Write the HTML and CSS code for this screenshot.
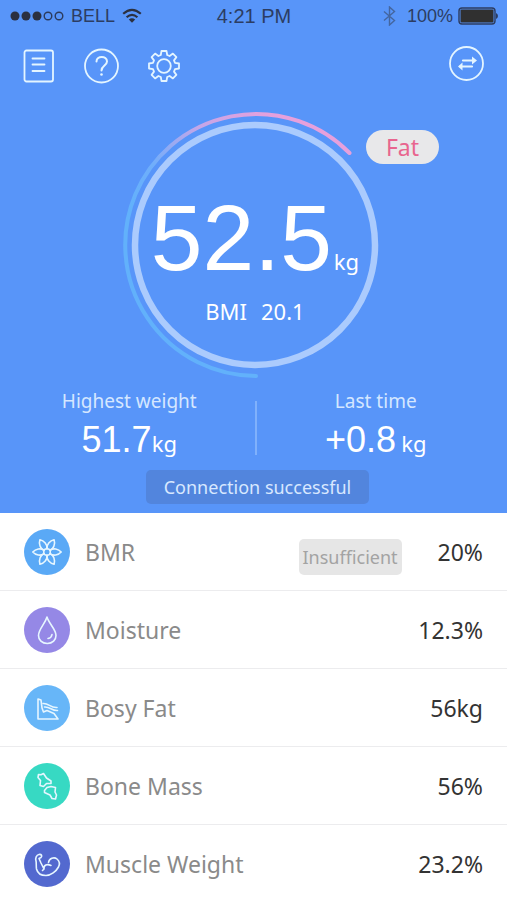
FILE: index.html
```html
<!DOCTYPE html>
<html lang="en">
<head>
<meta charset="utf-8">
<meta name="viewport" content="width=device-width, initial-scale=1">
<title>Body weight</title>
<link rel="stylesheet" href="styles.css">
</head>
<body>
<main class="app">
  <section class="hero">
    <div class="status">
      <div class="status-side">
        <svg class="signal" width="54" height="12" viewBox="0 0 54 12" aria-hidden="true">
          <g fill="#2b3040"><circle cx="5" cy="6" r="4.5"/><circle cx="16" cy="6" r="4.5"/><circle cx="27" cy="6" r="4.5"/></g>
          <g fill="none" stroke="#2b3a5c" stroke-width="1.4"><circle cx="38" cy="6" r="3.8"/><circle cx="49" cy="6" r="3.8"/></g>
        </svg>
        <span>BELL</span>
        <svg width="20" height="16" viewBox="0 0 20 16" aria-hidden="true">
          <g fill="none" stroke="#2b3040" stroke-width="2.2"><path d="M1.2 5.8Q10-2 18.8 5.8"/><path d="M4.6 9.2Q10 4.4 15.4 9.2"/></g>
          <path d="M6.8 11.4Q10 9 13.2 11.4L10 14.8Z" fill="#2b3040"/>
        </svg>
      </div>
      <span class="time">4:21 PM</span>
      <div class="status-side status-end">
        <svg class="bluetooth" width="13" height="20" viewBox="0 0 13 20" fill="none" stroke="#44669f" stroke-width="1.4" aria-hidden="true"><path d="M1 5.5L11.500 14.500L6.500 19V1L11.500 5.500L1 14.500"/></svg>
        <span>100%</span>
        <svg width="40" height="18" viewBox="0 0 40 18" aria-hidden="true">
          <rect x="1" y="1" width="36" height="16" rx="3" fill="none" stroke="#2c3c60" stroke-width="1.400"/>
          <rect x="2.500" y="2.500" width="33" height="13" rx="1" fill="#303030"/>
          <path d="M38 6Q40 7 40 9T38 12Z" fill="#2c3c60"/>
        </svg>
      </div>
    </div>

    <nav class="toolbar" aria-label="Tools">
      <button class="tool" aria-label="Records">
        <svg width="36" height="36" viewBox="0 0 36 36"><rect x="4.500" y="2.500" width="28.500" height="31" rx="2"/><path d="M12.500 10.500H24.500M12.500 16.500H24.500M12.500 23H24.500"/></svg>
      </button>
      <button class="tool" aria-label="Help">
        <svg width="36" height="36" viewBox="0 0 36 36"><circle cx="18.500" cy="18" r="16.500"/><path d="M13.500 13.500C13.500 7.500 24 7.500 24 13.500C24 17.500 18.500 17.500 18.500 22.500" stroke-width="2"/><circle cx="18.500" cy="26.500" r="1.300" class="dot"/></svg>
      </button>
      <button class="tool" aria-label="Settings">
        <svg width="36" height="36" viewBox="0 0 36 36"><circle cx="18" cy="18" r="6.800"/><path d="M15.500 3H20.500L21.200 7L23.600 8L26.900 5.600L30.400 9.100L28 12.400L29 14.800L33 15.500V20.500L29 21.200L28 23.600L30.400 26.900L26.900 30.400L23.600 28L21.200 29L20.500 33H15.500L14.800 29L12.400 28L9.100 30.400L5.600 26.900L8 23.600L7 21.200L3 20.500V15.500L7 14.800L8 12.400L5.600 9.100L9.100 5.600L12.400 8L14.800 7Z"/></svg>
      </button>
      <button class="tool tool-end" aria-label="Switch user">
        <svg width="36" height="36" viewBox="0 0 36 36"><circle cx="17.500" cy="17.500" r="16.500"/><path d="M14 14.500H25M11 20.500H23" stroke-width="2.200"/><path class="dot" d="M23 10.500L28 14.500L23 18.500ZM13.500 16.500L9 20.500L13.500 24.500Z"/></svg>
      </button>
    </nav>

    <div class="gauge">
      <svg class="rings" width="270" height="270" viewBox="0 0 270 270" fill="none" aria-hidden="true">
        <defs>
          <linearGradient id="arc" gradientUnits="userSpaceOnUse" x1="150" y1="0" x2="50" y2="130">
            <stop offset="0" stop-color="#e6a0dc"/><stop offset=".35" stop-color="#c4a6e8"/><stop offset=".7" stop-color="#6faefb"/><stop offset="1" stop-color="#62b1fb"/>
          </linearGradient>
        </defs>
        <circle cx="135" cy="135" r="120" stroke="#abcbfd" stroke-width="6.500"/>
        <path d="M229.500 43A131 131 0 1 0 136 266" stroke="url(#arc)" stroke-width="4" stroke-linecap="round"/>
      </svg>
      <div class="reading">
        <p class="weight">52.5<span class="unit">kg</span></p>
        <p class="bmi"><span>BMI</span><span>20.1</span></p>
      </div>
      <span class="tag">Fat</span>
    </div>

    <div class="stats">
      <div class="stat">
        <h2>Highest weight</h2>
        <p>51.7<span class="unit">kg</span></p>
      </div>
      <div class="divider"></div>
      <div class="stat stat-last">
        <h2>Last time</h2>
        <p>+0.8<span class="unit">kg</span></p>
      </div>
    </div>
    <p class="toast" role="status">Connection successful</p>
  </section>

  <ul class="metrics">
    <li>
      <span class="badge sky"><svg width="46" height="46" viewBox="0 0 46 46"><defs><path id="petal" d="M26 21.500C29 18.500 34.500 20 37.200 23C34.500 26 29 27.500 26 24.500"/></defs><circle cx="23" cy="23" r="3.300"/><use href="#petal"/><use href="#petal" transform="rotate(60 23 23)"/><use href="#petal" transform="rotate(120 23 23)"/><use href="#petal" transform="rotate(180 23 23)"/><use href="#petal" transform="rotate(240 23 23)"/><use href="#petal" transform="rotate(300 23 23)"/></svg></span>
      <span class="name">BMR</span><span class="note">Insufficient</span><span class="value">20%</span>
    </li>
    <li>
      <span class="badge violet"><svg width="46" height="46" viewBox="0 0 46 46"><path d="M23 10C21 17 14.500 22 14.500 28.500C14.500 33 18 36.500 23.300 36.500C28.500 36.500 32 33 32 28.500C32 22 25 17 23 10Z"/><path d="M28 27.500Q27.500 31 24 31.500"/></svg></span>
      <span class="name">Moisture</span><span class="value">12.3%</span>
    </li>
    <li>
      <span class="badge azure"><svg width="46" height="46" viewBox="0 0 46 46"><path d="M14 14L17 15L18 23L19.500 27L23 25.500L30 28.500L34 34H14Z"/><path d="M19 18.500C25 18 26 23 33 22.500M20.500 22C26 21.500 28 26 33.500 25.500"/></svg></span>
      <span class="name">Bosy Fat</span><span class="value">56kg</span>
    </li>
    <li>
      <span class="badge teal"><svg width="46" height="46" viewBox="0 0 46 46"><path d="M14.500 11.500L17 11.800L19.500 10.500L22.500 15L27 18L27 20.500L22.500 20.500L19.500 23.500L16 22.500L16.500 17.500L14 14.500Z"/><path d="M23 24.500L27 23.500L31.500 24.500L31 29L32.500 32L31.500 36L28 35.500L26 32L20.500 29.500L20.500 27.500Z"/></svg></span>
      <span class="name">Bone Mass</span><span class="value">56%</span>
    </li>
    <li>
      <span class="badge indigo"><svg width="46" height="46" viewBox="0 0 46 46"><path d="M12 20C11 17 12.500 14 15 13.500C17.500 13 18.500 15 17 16.500L15 17.500L17 22L20 28C19.500 24 23 22.500 27 24.500M20 28L18.500 29.500M24.500 21.500C25 17.500 30 15.500 33 18C36 20.500 36 23 34.500 26C32 30.500 27 34.500 22 34.500C17 34.500 13.500 32 12.500 28C12 25 12.500 22 12 20"/></svg></span>
      <span class="name">Muscle Weight</span><span class="value">23.2%</span>
    </li>
  </ul>
</main>
</body>
</html>
```
FILE: styles.css
```css
* { box-sizing: border-box; }

body,
h2,
p,
ul {
  margin: 0;
  padding: 0;
}

body {
  background: #fff;
  color: #333;
  font-family: "Noto Sans", sans-serif;
}

svg { display: block; }

.hero {
  display: flex;
  flex-direction: column;
  background: #5895f9;
  color: #fff;
  padding-bottom: 9px;
}

.status {
  display: grid;
  grid-template-columns: 1fr auto 1fr;
  align-items: center;
  height: 32px;
  padding: 0 9px 0 10px;
  color: #2c3d63;
  font: 18px/32px "Liberation Sans", sans-serif;
}

.time { font-size: 20px; }

.status-side {
  display: flex;
  align-items: center;
  gap: 7px;
}

.status-end {
  justify-content: flex-end;
  gap: 5px;
}

.bluetooth { margin-right: 6px; }

.toolbar {
  display: flex;
  gap: 27px;
  padding: 16px 22px 0 20px;
}

.tool {
  display: block;
  width: 36px;
  height: 36px;
  padding: 0;
  border: 0;
  background: none;
  cursor: pointer;
}

.tool svg {
  fill: none;
  stroke: #e4f5ff;
  stroke-width: 1.8;
  stroke-linejoin: round;
  stroke-linecap: round;
}

.tool .dot {
  fill: #e4f5ff;
  stroke: none;
}

.tool-end {
  margin: -2px 0 0 auto;
}

.gauge {
  position: relative;
  display: grid;
  justify-items: center;
  align-self: center;
  margin: 26px 0 0 3px;
}

.rings,
.reading { grid-area: 1 / 1; }

.reading {
  display: flex;
  flex-direction: column;
  align-items: center;
  padding-top: 76px;
}

.weight {
  font: 93px/104px "Liberation Sans", sans-serif;
  white-space: nowrap;
}

.unit {
  font: 22px/24px "Noto Sans", sans-serif;
}

.weight .unit { margin-left: 2px; }

.bmi {
  display: flex;
  gap: 14px;
  font-size: 22px;
  line-height: 42px;
}

.tag {
  position: absolute;
  left: 246px;
  top: 20px;
  width: 73px;
  border-radius: 17px;
  background: #e8e8ea;
  color: #e8658f;
  font-size: 23px;
  line-height: 34px;
  text-align: center;
}

.stats {
  display: grid;
  grid-template-columns: 1fr 2px 1fr;
  align-items: end;
  padding: 6px 0 0 4px;
}

.stat {
  text-align: center;
}

.stat h2 {
  color: #d5e7ff;
  font-size: 19px;
  font-weight: 400;
  line-height: 30px;
}

.stat p {
  font: 36px/48px "Liberation Sans", sans-serif;
}

.stat-last { padding-right: 12px; }

.stat-last .unit { margin-left: 5px; }

.divider {
  height: 54px;
  margin-bottom: 9px;
  background: #80b1fc;
}

.toast {
  align-self: center;
  margin: 6px 0 0 8px;
  padding: 0 18px;
  border-radius: 5px;
  background: #5285dd;
  color: #d8e8ff;
  font-size: 18px;
  line-height: 34px;
}

.metrics { list-style: none; }

.metrics li {
  display: flex;
  align-items: center;
  height: 78px;
  padding: 0 24px;
  border-bottom: 1px solid #ececee;
}

.metrics li:last-child {
  height: 75px;
  padding-top: 2px;
  border-bottom: 0;
}

.badge {
  flex: none;
  border-radius: 50%;
}

.badge svg {
  fill: none;
  stroke: #e6f6ff;
  stroke-width: 1.6;
  stroke-linejoin: round;
  stroke-linecap: round;
}

.sky { background: #5aa9f6; }
.violet { background: #9588e6; }
.azure { background: #67b6f8; }
.teal { background: #37d9c3; }
.indigo { background: #5369cf; }

.name {
  margin-left: 15px;
  color: #8a8a8a;
  font-size: 23px;
}

.value {
  margin-left: auto;
  color: #333;
  font-size: 23px;
}

.note {
  align-self: flex-end;
  margin: 0 0 15px auto;
  padding: 0 4px;
  border-radius: 5px;
  background: #e6e6e6;
  color: #a3a3a3;
  font-size: 18px;
  line-height: 36px;
}

.note + .value { margin-left: 36px; }
```
